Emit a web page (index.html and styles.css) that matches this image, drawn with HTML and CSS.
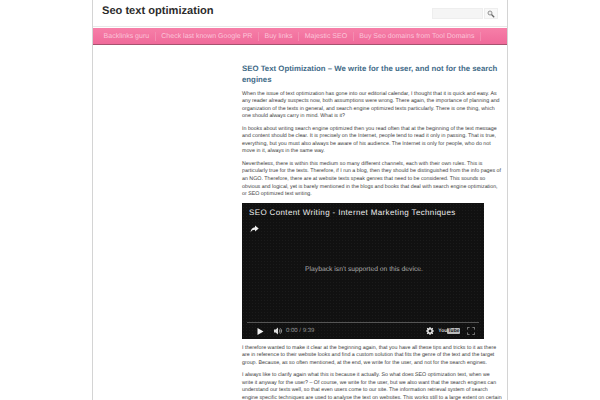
FILE: index.html
```html
<!DOCTYPE html>
<html lang="en">
<head>
<meta charset="utf-8">
<title>Seo text optimization</title>
<link rel="stylesheet" href="styles.css">
</head>
<body>
<div class="page">
  <header class="header">
    <h1 class="site-title">Seo text optimization</h1>
    <form class="search">
      <input class="search-input" type="text" aria-label="Search">
      <button class="search-btn" type="button" aria-label="Search">
        <svg width="8" height="8" viewBox="0 0 8 8"><circle cx="3" cy="3" r="2" fill="#eee" stroke="#888" stroke-width=".9"/><path d="M4.5 4.5 7.2 7.2" stroke="#666" stroke-width="1.3"/></svg>
      </button>
    </form>
  </header>
  <nav class="nav">
    <a class="nav-item">Backlinks guru</a>
    <a class="nav-item">Check last known Google PR</a>
    <a class="nav-item">Buy links</a>
    <a class="nav-item">Majestic SEO</a>
    <a class="nav-item">Buy Seo domains from Tool Domains</a>
  </nav>
  <div class="main">
    <aside class="sidebar"></aside>
    <article class="content">
      <h2 class="post-title">SEO Text Optimization – We write for the user, and not for the search engines</h2>
      <p>When the issue of text optimization has gone into our editorial calendar, I thought that it is quick and easy. As any reader already suspects now, both assumptions were wrong. There again, the importance of planning and organization of the texts in general, and search engine optimized texts particularly. There is one thing, which one should always carry in mind. What is it?</p>
      <p>In books about writing search engine optimized then you read often that at the beginning of the text message and content should be clear. It is precisely on the Internet, people tend to read it only in passing. That is true, everything, but you must also always be aware of his audience. The Internet is only for people, who do not move in it, always in the same way.</p>
      <p>Nevertheless, there is within this medium so many different channels, each with their own rules. This is particularly true for the texts. Therefore, if I run a blog, then they should be distinguished from the info pages of an NGO. Therefore, there are at website texts speak genres that need to be considered. This sounds so obvious and logical, yet is barely mentioned in the blogs and books that deal with search engine optimization, or SEO optimized text writing.</p>
      <div class="video">
        <div class="video-title">SEO Content Writing - Internet Marketing Techniques</div>
        <svg class="share" width="9" height="8" viewBox="0 0 9 8"><path d="M5 .5 8.7 3.6 5 6.6V4.8C3 4.8 1.6 5.5.5 7.4.8 4.2 2.4 2.5 5 2.3Z" fill="#eee"/></svg>
        <div class="video-msg">Playback isn't supported on this device.</div>
        <div class="progress"></div>
        <div class="controls">
          <svg width="7" height="7" viewBox="0 0 7 7"><path d="M.5 0 6.5 3.5.5 7Z" fill="#f2f2f2"/></svg>
          <svg class="vol" width="9" height="8" viewBox="0 0 9 8"><path d="M0 2.6H1.7L4 .6V7.4L1.7 5.4H0Z" fill="#ddd"/><path d="M5.2 2.4C6 3.2 6 4.8 5.2 5.6M6.3 1.4C7.8 2.8 7.8 5.2 6.3 6.6" stroke="#ccc" stroke-width=".8" fill="none"/></svg>
          <span class="time">0:00 / 9:39</span>
          <svg class="gear" width="8" height="8" viewBox="0 0 8 8"><circle cx="4" cy="4" r="2.2" fill="none" stroke="#eee" stroke-width="1.5"/><path d="M4 0V8M0 4H8M1.2 1.2 6.8 6.8M6.8 1.2 1.2 6.8" stroke="#eee" stroke-width="1.1" stroke-dasharray="1.3 5.4"/></svg>
          <span class="yt">You<span class="yt-box">Tube</span></span>
          <svg class="fs" width="8" height="8" viewBox="0 0 8 8"><path d="M.4 2.6V.4H2.6M5.4.4H7.6V2.6M7.6 5.4V7.6H5.4M2.6 7.6H.4V5.4" fill="none" stroke="#999" stroke-width=".8"/></svg>
        </div>
      </div>
      <p>I therefore wanted to make it clear at the beginning again, that you have all these tips and tricks to it as there are in reference to their website looks and find a custom solution that fits the genre of the text and the target group. Because, as so often mentioned, at the end, we write for the user, and not for the search engines.</p>
      <p>I always like to clarify again what this is because it actually. So what does SEO optimization text, when we write it anyway for the user? – Of course, we write for the user, but we also want that the search engines can understand our texts well, so that even users come to our site. The information retrieval system of search engine specific techniques are used to analyse the text on websites. This works still to a large extent on certain</p>
    </article>
  </div>
</div>
</body>
</html>
```
FILE: styles.css
```css
html, body {
  margin: 0;
  height: 400px;
  overflow: hidden;
  background: #fff;
}
body {
  font-family: "Liberation Sans", Arial, sans-serif;
  color: #444;
  text-rendering: geometricPrecision;
}
.page {
  width: 414px;
  height: 400px;
  margin-left: 92px;
  border-left: 1px solid #d4d4d4;
  border-right: 1px solid #d4d4d4;
  overflow: hidden;
}
.header {
  display: flex;
  justify-content: space-between;
  align-items: flex-start;
  height: 26px;
  padding: 0 9px 0 9px;
  border-bottom: 1px solid #e8e8e8;
}
.site-title {
  margin: 3px 0 0;
  font-size: 11.1px;
  line-height: 16px;
  font-weight: 700;
  color: #2b2b2b;
}
.search {
  display: flex;
  gap: 1px;
  margin-top: 8px;
}
.search-input {
  box-sizing: border-box;
  width: 51px;
  height: 11px;
  padding: 0;
  border: 1px solid #eee;
  background: #f5f5f5;
}
.search-btn {
  box-sizing: border-box;
  display: flex;
  align-items: center;
  justify-content: center;
  width: 14px;
  height: 11px;
  padding: 0;
  border: 1px solid #eee;
  background: #f8f8f8;
}
.nav {
  display: flex;
  box-sizing: border-box;
  height: 17px;
  padding: 3.5px 0 0 5px;
  margin-top: 1px;
  background: linear-gradient(#f67fa8, #f06a9a);
  border-bottom: 1px solid #a8526f;
}
.nav-item {
  padding: 0 5.6px;
  height: 9px;
  font-size: 7px;
  line-height: 9px;
  color: #fbc4d8;
  border-right: 1px solid #f38cb0;
}
.main {
  display: flex;
}
.sidebar {
  width: 149px;
  flex: none;
}
.content {
  width: 260px;
  padding-top: 19px;
}
.post-title {
  margin: 0 0 5.5px;
  font-size: 7.82px;
  line-height: 10.5px;
  font-weight: 700;
  color: #3f6b88;
}
.content p {
  margin: 0 0 4.4px;
  font-size: 5.3px;
  line-height: 7.65px;
  color: #3c3c3c;
}
.video {
  display: flex;
  flex-direction: column;
  box-sizing: border-box;
  width: 242px;
  height: 136px;
  margin: 3.2px 0 5.6px;
  padding: 5px 5px 3px 7px;
  background-color: #111;
  background-image:
    radial-gradient(#1b1b1b 0.5px, transparent 0.6px),
    radial-gradient(#0a0a0a 0.5px, transparent 0.6px);
  background-size: 3px 3px, 4px 4px;
}
.video-title {
  font-size: 8px;
  line-height: 9px;
  color: #eee;
  letter-spacing: .36px;
}
.share {
  margin: 8px 0 0 1px;
}
.video-msg {
  margin-top: 33px;
  align-self: center;
  font-size: 6.75px;
  line-height: 8px;
  color: #aaa;
}
.progress {
  margin: 48px 0 0 -2px;
  height: 1px;
  background: #555;
}
.controls {
  display: flex;
  align-items: center;
  margin-top: 4px;
  padding-left: 8px;
}
.vol {
  margin-left: 10px;
}
.time {
  margin-left: 3px;
  font-size: 6px;
  color: #999;
}
.gear {
  margin-left: auto;
}
.yt {
  display: flex;
  align-items: center;
  margin-left: 4px;
  font-size: 5px;
  font-weight: 700;
  color: #ccc;
}
.yt-box {
  padding: 0 .5px;
  background: #bbb;
  color: #111;
  border-radius: 1px;
}
.fs {
  margin: 0 4px 0 7px;
}
```
